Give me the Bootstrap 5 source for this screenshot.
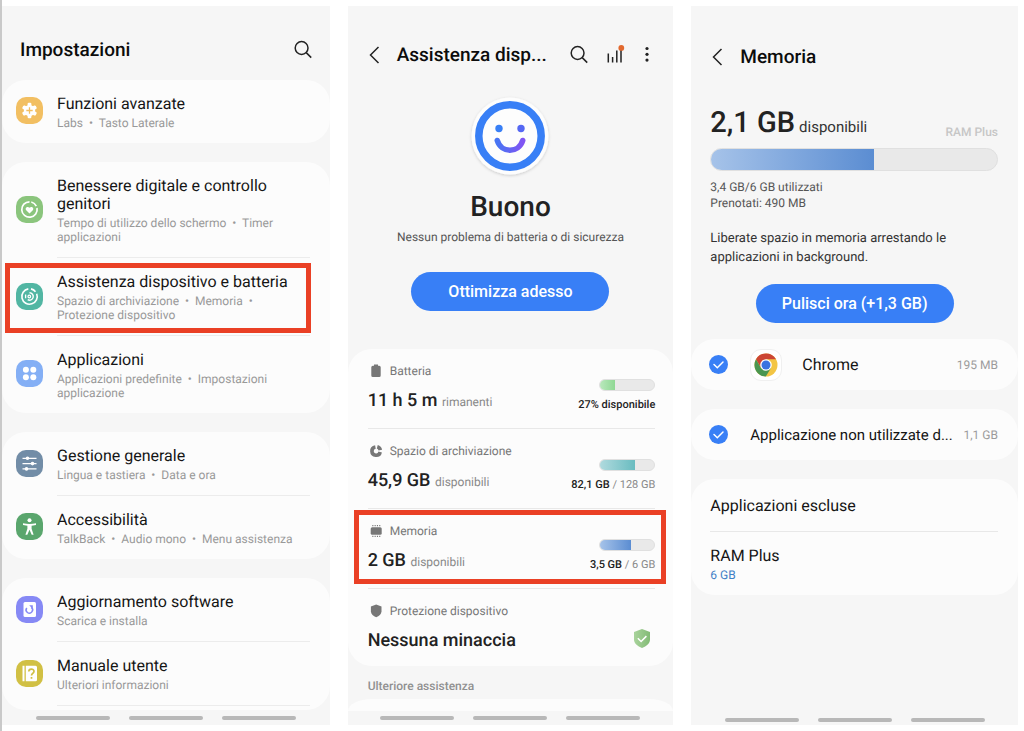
<!DOCTYPE html>
<html lang="it">
<head>
<meta charset="utf-8">
<meta name="viewport" content="width=device-width, initial-scale=1">
<title>Impostazioni - Memoria</title>
<link href="https://cdn.jsdelivr.net/npm/bootstrap@5.3.0/dist/css/bootstrap.min.css" rel="stylesheet">
<style>
body { font-family: Roboto, "Noto Sans", sans-serif; color: #151515; background: #fff; font-size: 16px; line-height: 18px; text-rendering: geometricPrecision; }
.screens { display: grid; grid-template-columns: 328fr 326fr 327fr; column-gap: 18px; min-height: 100vh; padding: 6px 6px 6px 0; border-left: 2px solid #c9c9c9; }
.phone { background: #f6f6f6; min-width: 0; overflow: hidden; }
.panel { background: #fcfcfc; border-radius: 24px; }
h1 { font-size: 19px; line-height: 24px; font-weight: 500; margin: 0; color: #0c0c0c; white-space: nowrap; }
.icon-btn { border: 0; background: none; padding: 0; display: flex; color: #222; }
a { color: inherit; text-decoration: none; }
svg { display: block; flex: none; }

.head-main { height: 74px; padding: 14px 17px 0 18px; }
.stack { gap: 19px; }
.entry { position: relative; display: flex; align-items: center; gap: 14px; padding: 0 20px 0 14px; }
.entry > svg { margin-bottom: 2px; }
.entry-text { flex: 1; padding: 15px 0 13px; }
.entry.ruled .entry-text { border-bottom: 1px solid #ececec; }
.entry small, .sub { display: block; font-size: 12px; line-height: 14px; color: #999; margin-top: 3px; }
.cut { padding-bottom: 4px; }
.marked::after { content: ""; position: absolute; border: 5px solid #ea4025; pointer-events: none; }
.entry.marked::after { inset: 5px 19px 3px 3px; }

.gestures { display: flex; justify-content: center; gap: 19px; margin-top: auto; padding: 5px 0; }
.gestures.low { padding: 7px 0 3px; }
.gestures button { width: 74px; height: 4px; border: 0; border-radius: 2px; padding: 0; background: #b8b8b8; }

.head-sub { height: 72px; padding: 26px 20px 0; }
.face { margin-top: 16px; }
.mood { font-size: 28px; line-height: 36px; font-weight: 500; color: #222; margin-top: 11px; }
.note { font-size: 12px; line-height: 16px; color: #555; }
.pill { background: #387ff6; color: #fff; border: 0; border-radius: 20px; height: 39px; width: 198px; font-weight: 500; font-size: 16px; padding: 0; }
.pill:hover { background: #2f72e2; color: #fff; }
.optimise { margin: 27px 0 38px; }
.stat { position: relative; padding: 0 18px 0 20px; }
.stat-in { display: flex; justify-content: space-between; padding: 14px 0 15px; }
.stat.ruled .stat-in { border-bottom: 1px solid #e8e8e8; }
.stat-label { display: flex; align-items: center; gap: 6px; font-size: 12px; line-height: 16px; color: #777; margin-bottom: 10px; white-space: nowrap; }
.stat-value { font-size: 18px; line-height: 24px; font-weight: 500; color: #222; white-space: nowrap; }
.stat-value span { font-size: 12px; line-height: 12px; font-weight: 400; color: #888; }
.stat-side { display: flex; flex-direction: column; align-items: flex-end; padding-top: 16px; font-size: 11px; line-height: 16px; color: #888; }
.stat-side b { font-weight: 500; color: #222; }
.meter { background: #e9e9e9; border: 1px solid #e0e0e0; border-radius: 12px; overflow: hidden; }
.meter > div { height: 100%; }
.stat .meter { width: 56px; height: 12px; margin-bottom: 6px; }
.g-green { background: linear-gradient(90deg, #b9e8bc, #8fd894); }
.g-teal { background: linear-gradient(90deg, #b0dade, #69bcc0); }
.g-blue { background: linear-gradient(90deg, #a6c3e9, #5b8dd2); }
.stat.marked::after { inset: 1px 7px 5px 6px; }
.stat:last-child .stat-in { padding-bottom: 13px; }
.further { font-size: 12px; line-height: 16px; font-weight: 500; color: #909090; padding: 12px 20px 5px; }
.peek { height: 12px; border-radius: 24px 24px 0 0 / 12px 12px 0 0; }

.head-mem { height: 72px; padding: 30px 20px 0; }
.usage { padding: 28px 20px 0 19px; }
.total { font-size: 29px; line-height: 34px; font-weight: 500; color: #222; display: flex; align-items: baseline; gap: 4px; }
.total span { font-size: 15px; line-height: 14px; font-weight: 400; color: #333; }
.ram-tag { font-size: 12px; line-height: 16px; font-weight: 500; color: #c6c6c6; }
.big-meter { height: 23px; }
.lead-in { font-size: 13px; line-height: 19px; color: #333; margin: 18px 0 17px; }
.app-line { height: 51px; padding: 0 20px 0 18px; }
.app-line .form-check-input { width: 19px; height: 19px; margin: 0 22px 0 0; flex: none; border: 0; border-radius: 50%; }
.app-line .form-check-input:checked { background: #387ff6 url("data:image/svg+xml,%3Csvg xmlns='http://www.w3.org/2000/svg' viewBox='0 0 19 19'%3E%3Cpath d='M5 9.5l3.3 3.2L14 7' fill='none' stroke='white' stroke-width='1.5' stroke-linecap='round'/%3E%3C/svg%3E") center/contain; }
.long-name { font-size: 15px; white-space: nowrap; }
.size { font-size: 12px; color: #9b9b9b; white-space: nowrap; }
.tile { width: 32px; height: 32px; border-radius: 11px; background: #fff; border: 1px solid #f0f0f0; display: flex; align-items: center; justify-content: center; }
.links { padding: 0 20px 0 19px; }
.links a { display: block; padding: 15px 0 13px; }
.links a:first-child { padding: 18px 0 16px; border-bottom: 1px solid #e8e8e8; }
.blue { color: #3f7fc6 !important; }
</style>
</head>
<body>
<main class="screens">

  <section class="phone d-flex flex-column">
    <header class="head-main d-flex align-items-center justify-content-between">
      <h1>Impostazioni</h1>
      <button class="icon-btn" aria-label="Cerca"><svg width="20" height="20" viewBox="0 0 20 20" fill="none" stroke="currentColor" stroke-width="1.5"><circle cx="8.6" cy="8" r="6.4"/><path d="M13.2 12.6l5 5"/></svg></button>
    </header>
    <div class="stack d-flex flex-column">
      <div class="panel">
        <a class="entry" href="#">
          <svg width="27" height="27" viewBox="0 0 27 27"><rect width="27" height="27" rx="10" fill="#f2bf62"/><g fill="#fff"><circle cx="13.5" cy="13.5" r="5.6"/><rect x="11.600" y="5.800" width="3.800" height="15.400" rx="1.200"/><rect x="11.600" y="5.800" width="3.800" height="15.400" rx="1.200" transform="rotate(60 13.5 13.5)"/><rect x="11.600" y="5.800" width="3.800" height="15.400" rx="1.200" transform="rotate(120 13.5 13.5)"/></g><path d="M13.5 10.300v6.400M10.300 13.500h6.400" stroke="#f2bf62" stroke-width="1.300"/></svg>
          <div class="entry-text">Funzioni avanzate<small>Labs&nbsp; •&nbsp; Tasto Laterale</small></div>
        </a>
      </div>
      <div class="panel">
        <a class="entry ruled" href="#">
          <svg width="27" height="27" viewBox="0 0 27 27"><rect width="27" height="27" rx="10" fill="#8bc57d"/><path d="M15.3 6a7.7 7.7 0 0 1 5 4.100M21 12a7.700 7.700 0 1 1-7.500-6.200" fill="none" stroke="#fff" stroke-width="1.700"/><path d="M13.500 17.600l-3.300-3.400c-1.600-2 1-4.600 3.300-2.400 2.300-2.200 4.900.4 3.300 2.400z" fill="#fff"/></svg>
          <div class="entry-text">Benessere digitale e controllo genitori<small>Tempo di utilizzo dello schermo&nbsp; •&nbsp; Timer applicazioni</small></div>
        </a>
        <a class="entry ruled marked" href="#">
          <svg width="27" height="27" viewBox="0 0 27 27" fill="none" stroke="#fff"><rect width="27" height="27" rx="10" fill="#52b6a3" stroke="none"/><path d="M15 5.900a7.700 7.700 0 0 1 4.500 2.800M20.700 10.700a7.700 7.700 0 1 1-8.400-4.800" stroke-width="1.600"/><path d="M13.500 9.800a3.700 3.700 0 1 1-1.800 6.900" stroke-width="1.400"/><circle cx="13.300" cy="13.500" r="1.300" stroke-width="1.200"/><path d="M9.600 11.500v3.800" stroke-width="1.300"/></svg>
          <div class="entry-text">Assistenza dispositivo e batteria<small>Spazio di archiviazione&nbsp; •&nbsp; Memoria&nbsp; • Protezione dispositivo</small></div>
        </a>
        <a class="entry" href="#">
          <svg width="27" height="27" viewBox="0 0 27 27"><rect width="27" height="27" rx="10" fill="#84aff5"/><g fill="#fff"><circle cx="9.900" cy="9.800" r="3"/><circle cx="17.300" cy="9.800" r="3"/><circle cx="9.900" cy="17.300" r="3"/><circle cx="17.300" cy="17.300" r="3"/></g></svg>
          <div class="entry-text">Applicazioni<small>Applicazioni predefinite&nbsp; •&nbsp; Impostazioni applicazione</small></div>
        </a>
      </div>
      <div class="panel">
        <a class="entry ruled" href="#">
          <svg width="27" height="27" viewBox="0 0 27 27"><rect width="27" height="27" rx="10" fill="#728da7"/><path d="M6.500 8.300h14M6.500 13.600h14M6.500 18.900h14" stroke="#fff" stroke-width="1.300"/><g fill="#fff"><circle cx="11.500" cy="8.300" r="1.800"/><circle cx="16.500" cy="13.600" r="1.800"/><circle cx="10.500" cy="18.900" r="1.800"/></g></svg>
          <div class="entry-text">Gestione generale<small>Lingua e tastiera&nbsp; •&nbsp; Data e ora</small></div>
        </a>
        <a class="entry" href="#">
          <svg width="27" height="27" viewBox="0 0 27 27"><rect width="27" height="27" rx="10" fill="#5aa66d"/><circle cx="13.500" cy="7.300" r="2" fill="#fff"/><path d="M7 10.200q6.500 1.600 13 0v1.700l-4.400.9v3l2 6h-1.900l-2.200-5-2.200 5H9.400l2-6v-3L7 11.900z" fill="#fff"/></svg>
          <div class="entry-text">Accessibilità<small>TalkBack&nbsp; •&nbsp; Audio mono&nbsp; •&nbsp; Menu assistenza</small></div>
        </a>
      </div>
      <div class="panel cut">
        <a class="entry ruled" href="#">
          <svg width="27" height="27" viewBox="0 0 27 27"><rect width="27" height="27" rx="10" fill="#8689f5"/><rect x="7.500" y="6" width="12.500" height="15" rx="1.500" fill="#fff"/><path d="M10.800 12a3.200 3.200 0 1 0 4.500-.6" fill="none" stroke="#8689f5" stroke-width="1.500"/><path d="M13.200 9.300h3.600v3.600z" fill="#8689f5"/></svg>
          <div class="entry-text">Aggiornamento software<small>Scarica e installa</small></div>
        </a>
        <a class="entry ruled" href="#">
          <svg width="27" height="27" viewBox="0 0 27 27"><rect width="27" height="27" rx="10" fill="#d1c044"/><path d="M6.500 5.700h2v15.600h-2zM9.800 5.700h9.700q1.500 0 1.500 1.500v12.600q0 1.500-1.500 1.500H9.800z" fill="#fff"/><path d="M12.800 11.500c0-3.300 5.200-3.200 5.200-.2 0 2-2.500 2.200-2.500 4.200M15.500 17v1.800" fill="none" stroke="#d1c044" stroke-width="1.700"/></svg>
          <div class="entry-text">Manuale utente<small>Ulteriori informazioni</small></div>
        </a>
      </div>
    </div>
    <nav class="gestures" aria-label="Navigazione"><button aria-label="Recenti"></button><button aria-label="Home"></button><button aria-label="Indietro"></button></nav>
  </section>

  <section class="phone d-flex flex-column">
    <header class="head-sub d-flex align-items-center">
      <button class="icon-btn" aria-label="Indietro"><svg width="13" height="18" viewBox="0 0 13 18" fill="none" stroke="currentColor" stroke-width="1.500"><path d="M10.500 1L2.500 9l8 8"/></svg></button>
      <h1 class="ms-3">Assistenza disp...</h1>
      <div class="d-flex align-items-center ms-auto gap-3">
        <button class="icon-btn" aria-label="Cerca"><svg width="20" height="20" viewBox="0 0 20 20" fill="none" stroke="currentColor" stroke-width="1.500"><circle cx="8.600" cy="8" r="6.400"/><path d="M13.200 12.600l5 5"/></svg></button>
        <button class="icon-btn" aria-label="Statistiche"><svg width="20" height="20" viewBox="0 0 20 20"><path d="M3.300 8.500v9M7.600 12v5.500M11.800 5.500v12M16 3v14.500" stroke="#222" stroke-width="1.500"/><circle cx="16.300" cy="2.900" r="2.900" fill="#e2692f"/></svg></button>
        <button class="icon-btn" aria-label="Altre opzioni"><svg width="12" height="20" viewBox="0 0 12 20" fill="#222"><circle cx="6" cy="3.500" r="1.600"/><circle cx="6" cy="9.300" r="1.600"/><circle cx="6" cy="15.100" r="1.600"/></svg></button>
      </div>
    </header>
    <div class="d-flex flex-column align-items-center text-center">
      <svg class="face" width="84" height="84" viewBox="0 0 84 84"><defs><linearGradient id="smile" x1="0" x2="1"><stop offset="0" stop-color="#4774f3"/><stop offset="1" stop-color="#8054f3"/></linearGradient><filter id="soft" x="-20%" y="-20%" width="140%" height="140%"><feDropShadow dx="0" dy="1" stdDeviation="1.500" flood-opacity=".18"/></filter></defs><circle cx="42" cy="42" r="38.500" fill="#fdfdfd" filter="url(#soft)"/><circle cx="42" cy="42" r="31.200" fill="none" stroke="#387ff6" stroke-width="7.500"/><circle cx="31" cy="34.500" r="3.700" fill="#387ff6"/><circle cx="53" cy="34.500" r="3.700" fill="#5568f3"/><path d="M29.300 46.500c4 13 21.400 13 25.400 0" fill="none" stroke="url(#smile)" stroke-width="5.600" stroke-linecap="round"/></svg>
      <div class="mood">Buono</div>
      <div class="note mt-1">Nessun problema di batteria o di sicurezza</div>
      <button class="btn pill optimise">Ottimizza adesso</button>
    </div>
    <div class="panel">
      <div class="stat ruled"><div class="stat-in">
        <div><div class="stat-label"><svg width="16" height="16" viewBox="0 0 16 16" fill="#777"><path d="M6 1.500h4v1.300h1.200q1.500 0 1.500 1.500v8.200q0 1.500-1.500 1.500H4.800q-1.500 0-1.500-1.500V4.300q0-1.500 1.500-1.500H6z"/></svg>Batteria</div><div class="stat-value">11 h 5 m <span>rimanenti</span></div></div>
        <div class="stat-side"><div class="meter"><div class="g-green" style="width:27%"></div></div><b>27% disponibile</b></div>
      </div></div>
      <div class="stat ruled"><div class="stat-in">
        <div><div class="stat-label"><svg width="16" height="16" viewBox="0 0 16 16" fill="none" stroke="#777"><path d="M7.400 3.900A4.200 4.200 0 1 0 12.200 9" stroke-width="3.600"/><path d="M9.300 3.800a4.200 4.200 0 0 1 3 3.300" stroke-width="3.600"/></svg>Spazio di archiviazione</div><div class="stat-value">45,9 GB <span>disponibili</span></div></div>
        <div class="stat-side"><div class="meter"><div class="g-teal" style="width:65%"></div></div><span><b>82,1 GB</b> / 128 GB</span></div>
      </div></div>
      <div class="stat ruled marked"><div class="stat-in">
        <div><div class="stat-label"><svg width="16" height="16" viewBox="0 0 16 16" fill="#777"><rect x="2.700" y="4.200" width="11" height="7.600" rx="1.500"/><path d="M4.300 2.700h8M4.300 13.300h8" stroke="#777" stroke-width="1.200" stroke-dasharray="1.100 1.200"/></svg>Memoria</div><div class="stat-value">2 GB <span>disponibili</span></div></div>
        <div class="stat-side"><div class="meter"><div class="g-blue" style="width:57%"></div></div><span><b>3,5 GB</b> / 6 GB</span></div>
      </div></div>
      <div class="stat"><div class="stat-in">
        <div><div class="stat-label"><svg width="16" height="16" viewBox="0 0 16 16" fill="#777"><path d="M8.200 1.500l5.300 2v4.800c0 2.900-2.500 4.900-5.300 5.900-2.800-1-5.300-3-5.300-5.900V3.500z"/></svg>Protezione dispositivo</div><div class="stat-value">Nessuna minaccia</div></div>
        <div class="align-self-end"><svg width="26" height="25" viewBox="0 0 26 25"><defs><linearGradient id="shield"><stop offset="0" stop-color="#a9d39c"/><stop offset="1" stop-color="#82bb75"/></linearGradient></defs><path d="M13 1l8 3v7.500c0 4-3.500 6.700-8 8.500-4.500-1.800-8-4.500-8-8.500V4z" fill="url(#shield)"/><path d="M8.800 10.300l3.300 3.200 5.300-5.400" fill="none" stroke="#fff" stroke-width="1.500"/></svg></div>
      </div></div>
    </div>
    <div class="further">Ulteriore assistenza</div>
    <div class="panel peek"></div>
    <nav class="gestures" aria-label="Navigazione"><button aria-label="Recenti"></button><button aria-label="Home"></button><button aria-label="Indietro"></button></nav>
  </section>

  <section class="phone d-flex flex-column">
    <header class="head-mem d-flex align-items-center">
      <button class="icon-btn" aria-label="Indietro"><svg width="13" height="18" viewBox="0 0 13 18" fill="none" stroke="currentColor" stroke-width="1.500"><path d="M10.500 1L2.500 9l8 8"/></svg></button>
      <h1 class="ms-3">Memoria</h1>
    </header>
    <div class="usage">
      <div class="d-flex justify-content-between align-items-end mb-2">
        <div class="total">2,1 GB <span>disponibili</span></div>
        <div class="ram-tag">RAM Plus</div>
      </div>
      <div class="meter big-meter"><div class="g-blue" style="width:57%"></div></div>
      <div class="note mt-2">3,4 GB/6 GB utilizzati<br>Prenotati: 490 MB</div>
      <p class="lead-in">Liberate spazio in memoria arrestando le<br>applicazioni in background.</p>
    </div>
    <button class="btn pill align-self-center">Pulisci ora (+1,3 GB)</button>
    <div class="stack d-flex flex-column mt-3">
      <div class="panel app-line d-flex align-items-center">
        <input class="form-check-input" type="checkbox" id="app1" checked>
        <label class="d-flex align-items-center" for="app1">
          <span class="tile"><svg width="24" height="24" viewBox="0 0 24 24"><circle cx="12" cy="12" r="11.500" fill="#f3c544"/><path d="M12 6.200h10a11.500 11.500 0 0 0-20 0l5 8.600z" fill="#cc4534"/><path d="M2 6.200a11.500 11.500 0 0 0 9.800 17.300L17 14.900 12 17.200 7 15z" fill="#4a9650"/><circle cx="12" cy="12" r="5.800" fill="#fff"/><circle cx="12" cy="12" r="4.500" fill="#3a72e0"/></svg></span>
          <span class="ms-3 ps-1">Chrome</span>
        </label>
        <span class="size ms-auto">195 MB</span>
      </div>
      <div class="panel app-line d-flex align-items-center">
        <input class="form-check-input" type="checkbox" id="app2" checked>
        <label class="long-name" for="app2">Applicazione non utilizzate d...</label>
        <span class="size ms-auto">1,1 GB</span>
      </div>
      <div class="panel links">
        <a href="#">Applicazioni escluse</a>
        <a href="#">RAM Plus<span class="sub blue">6 GB</span></a>
      </div>
    </div>
    <nav class="gestures low" aria-label="Navigazione"><button aria-label="Recenti"></button><button aria-label="Home"></button><button aria-label="Indietro"></button></nav>
  </section>
</main>
<script src="https://cdn.jsdelivr.net/npm/bootstrap@5.3.0/dist/js/bootstrap.bundle.min.js"></script>
</body>
</html>
